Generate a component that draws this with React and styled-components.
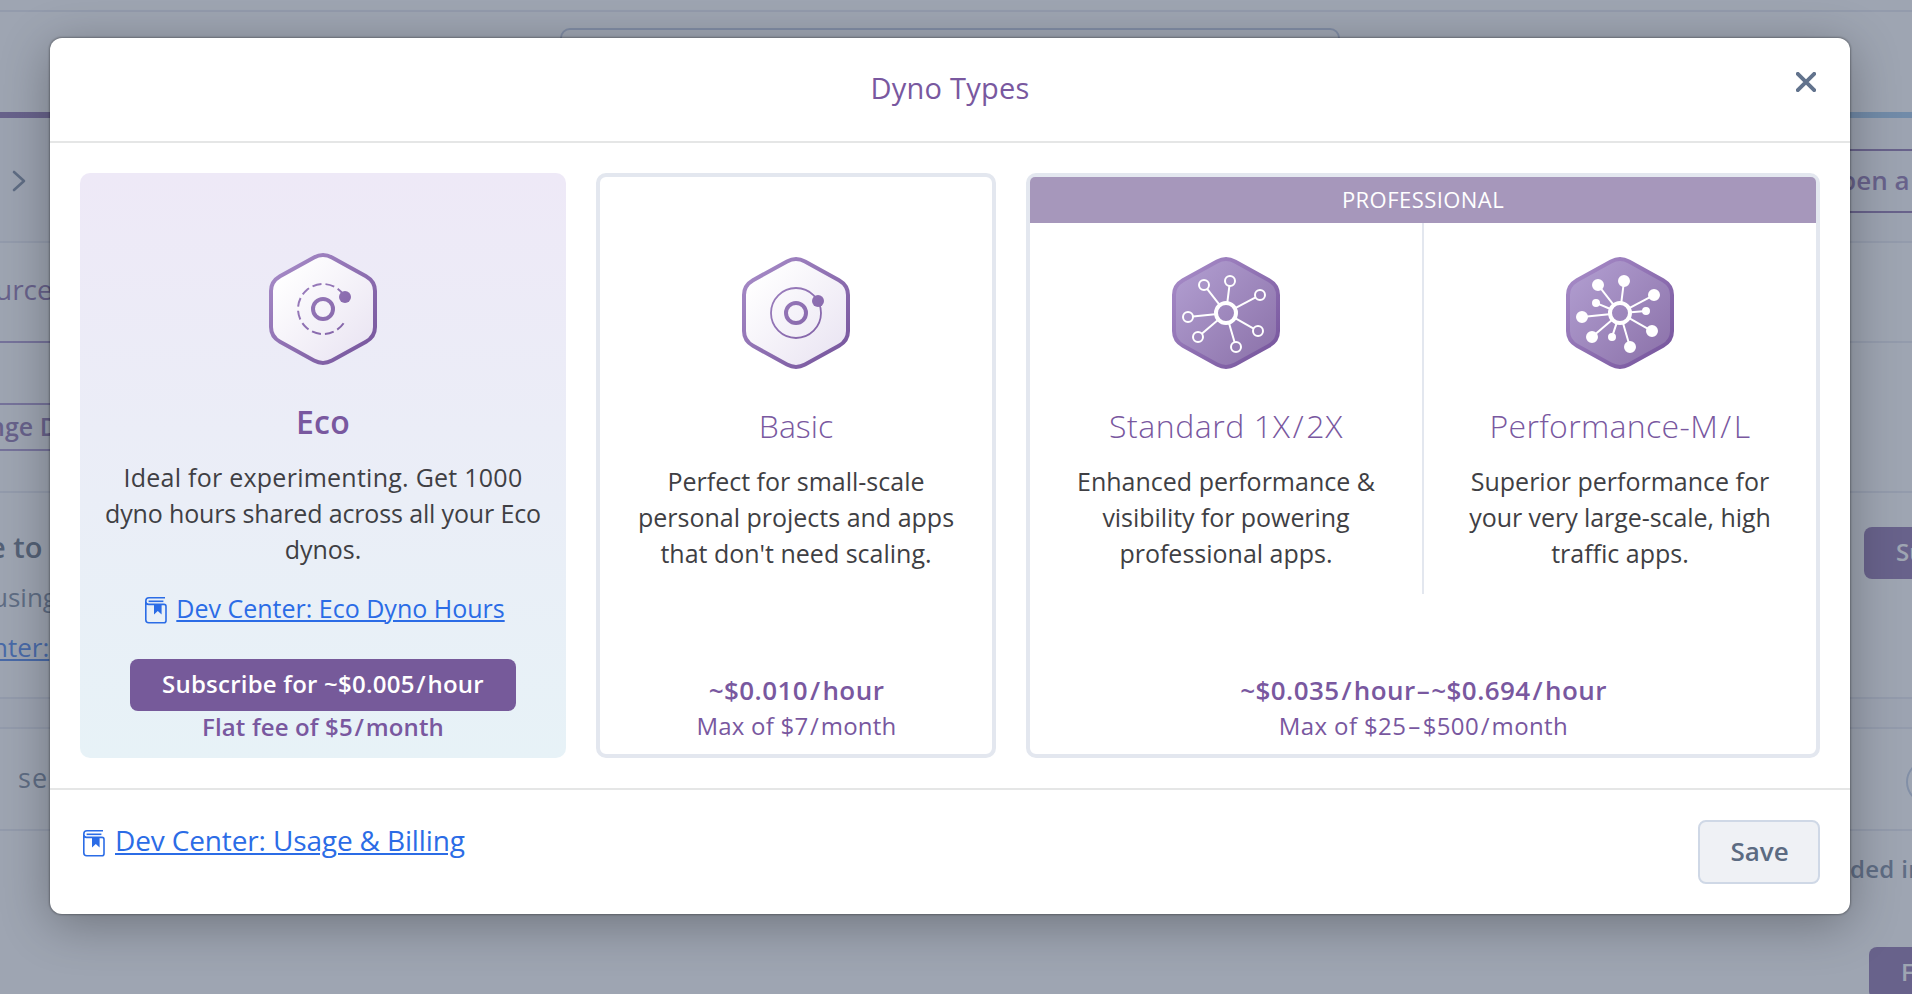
import React from "react";
import styled, { createGlobalStyle } from "styled-components";

const GlobalStyle = createGlobalStyle`
  *, *::before, *::after { box-sizing: border-box; }
  body {
    margin: 0;
    overflow: hidden;
    background: #ffffff;
    font-family: "Open Sans", "Noto Sans", sans-serif;
    color: #3f3f44;
  }
`;

const purple = "#79589f";
const slate = "#62738d";
const hairline = "#e3e7f0";

/* ---------- Page behind the dialog ---------- */

const Screen = styled.div`
  display: grid;
  width: 1912px;
  height: 994px;
  overflow: hidden;
`;

const Page = styled.main`
  grid-area: 1 / 1;
  display: flex;
  flex-direction: column;
  min-width: 0;
  overflow: hidden;
`;

const Strip = styled.div`
  display: flex;
  flex: none;
  justify-content: ${(p) => p.$justify || "space-between"};
  align-items: flex-start;
  height: ${(p) => p.$height}px;
  padding-top: ${(p) => p.$top || 0}px;
  background: ${(p) => p.$background || "transparent"};
  border-bottom: ${(p) => (p.$line === false ? "0" : `2px solid ${hairline}`)};
`;

const SearchBox = styled.div`
  width: 780px;
  height: 56px;
  margin-right: 12px;
  border: 2px solid #b4c0dc;
  border-radius: 10px;
`;

const AccentBar = styled.div`
  flex: none;
  height: 6px;
  background: linear-gradient(90deg, ${purple}, #8fbfe8);
`;

const LeftColumn = styled.div`
  display: flex;
  flex-direction: column;
  gap: ${(p) => p.$gap || 0}px;
  width: 60px;
  padding-top: ${(p) => p.$top || 0}px;
`;

const RightColumn = styled.div`
  width: 62px;
`;

const PageText = styled.span`
  display: block;
  height: 36px;
  margin-left: ${(p) => p.$shift || 0}px;
  font-size: ${(p) => p.$size || 25}px;
  font-weight: ${(p) => (p.$strong ? 600 : 400)};
  line-height: 36px;
  letter-spacing: ${(p) => p.$spacing || 0}px;
  color: ${(p) => p.$color || slate};
  white-space: nowrap;
`;

const PageLink = styled(PageText)`
  color: #2b6ce6;
  text-decoration: underline;
  text-decoration-thickness: 2px;
  text-underline-offset: 2px;
`;

const Tab = styled.div`
  width: 60px;
  height: 100px;
  padding-top: 28px;
  border-bottom: 2px solid #9b82c5;
`;

const OutlineButton = styled.div`
  width: ${(p) => p.$width}px;
  height: ${(p) => p.$height}px;
  padding-top: ${(p) => p.$top}px;
  border: solid ${(p) => p.$color || purple};
  border-width: 2px 0;
`;

const PageButton = styled.div`
  width: ${(p) => p.$width}px;
  height: 52px;
  padding: 7px 0 0 32px;
  border-radius: 8px 0 0 8px;
  background: ${purple};
  overflow: hidden;
`;

const Toggle = styled.div`
  width: 6px;
  height: 44px;
  overflow: hidden;

  &::before {
    content: "";
    display: block;
    width: 80px;
    height: 44px;
    border: 2px solid #b9c8e2;
    border-radius: 22px;
  }
`;

/* ---------- Dialog ---------- */

const Overlay = styled.div`
  grid-area: 1 / 1;
  z-index: 1;
  display: flex;
  align-items: flex-start;
  padding: 38px 0 0 50px;
  background: rgba(93, 105, 127, 0.6);
`;

const Dialog = styled.section`
  width: 1800px;
  height: 876px;
  display: flex;
  flex-direction: column;
  border-radius: 12px;
  background: #ffffff;
  box-shadow: 0 0 2px 1px rgba(0, 0, 0, 0.28), 0 10px 50px rgba(0, 0, 0, 0.3);
`;

const DialogHeader = styled.header`
  display: grid;
  grid-template-columns: 1fr auto 1fr;
  height: 105px;
  padding: 0 34px;
  border-bottom: 2px solid #e5e6e6;
`;

const DialogTitle = styled.h1`
  grid-column: 2;
  margin: 0;
  font-size: 29px;
  font-weight: 400;
  line-height: 99px;
  letter-spacing: 0.25px;
  color: ${purple};
`;

const CloseButton = styled.button`
  justify-self: end;
  width: 20px;
  height: 20px;
  margin: 34px 0 0;
  padding: 0;
  border: 0;
  background: none;
`;

const Plans = styled.div`
  display: grid;
  grid-template-columns: 486px 400px 794px;
  gap: 30px;
  height: 645px;
  padding: 30px 30px 0;
`;

const Card = styled.article`
  display: flex;
  flex-direction: column;
  height: 585px;
  border: 4px solid #e3e7ef;
  border-radius: 10px;
  text-align: center;
`;

const SelectedCard = styled(Card)`
  align-items: center;
  padding-top: 80px;
  border: 0;
  background: linear-gradient(180deg, #eee9f7, #e7f2f7);
`;

const Plan = styled.div`
  display: flex;
  flex-direction: column;
  align-items: center;
  padding: ${(p) => p.$top || 0}px 0 ${(p) => p.$bottom || 0}px;
`;

const HexIcon = styled.svg`
  display: block;
  width: 108px;
  height: 112px;
  overflow: visible;
`;

const PlanName = styled.h2`
  margin: 37px 0 17px;
  font-size: 32px;
  font-weight: ${(p) => (p.$selected ? 600 : 300)};
  line-height: 40px;
  letter-spacing: ${(p) => p.$spacing || 0}px;
  color: ${purple};
  white-space: nowrap;
`;

const Description = styled.p`
  display: flex;
  flex-direction: column;
  margin: 0 0 ${(p) => p.$bottom || 0}px;
  font-size: 25px;
  line-height: 36px;
  white-space: nowrap;
`;

const Line = styled.span`
  letter-spacing: ${(p) => p.$spacing || 0}px;
`;

const DocLink = styled.a`
  display: flex;
  gap: 9px;
  margin-left: ${(p) => p.$left || 0}px;
  font-size: ${(p) => p.$size}px;
  line-height: ${(p) => p.$line}px;
  letter-spacing: ${(p) => p.$spacing || 0}px;
  color: #2b6ce6;
  white-space: nowrap;

  span {
    text-decoration: underline;
    text-decoration-thickness: 2px;
    text-underline-offset: 2px;
  }
`;

const Book = styled.svg`
  flex: none;
  width: 22px;
  height: 27px;
  margin-top: ${(p) => p.$top}px;
`;

const SubscribeButton = styled.button`
  width: 386px;
  height: 52px;
  margin-top: 33px;
  padding: 0 0 3px;
  border: 0;
  border-radius: 8px;
  background: #765a9a;
  color: #ffffff;
  font: 600 24px "Open Sans", "Noto Sans", sans-serif;
  letter-spacing: 0.22px;
`;

const FlatFee = styled.div`
  font-size: 24px;
  font-weight: 600;
  line-height: 32px;
  letter-spacing: 0.15px;
  color: ${purple};
`;

const Slash = styled.span.attrs({ children: "/" })`
  margin: 0 0.07em;
`;

const Dash = styled.span.attrs({ children: "–" })`
  margin: 0 ${(p) => p.$gap}px;
`;

const Cost = styled.div`
  margin-top: auto;
  padding: 0 0 10px 1px;
  line-height: 36px;
  color: ${purple};
  white-space: nowrap;
`;

const Hourly = styled.div`
  font-size: 26px;
  font-weight: 600;
  letter-spacing: 0.45px;
`;

const Monthly = styled.div`
  font-size: 24px;
  letter-spacing: ${(p) => p.$spacing}px;
`;

const GroupLabel = styled.div`
  height: 46px;
  border-radius: 5px 5px 0 0;
  background: #a697bb;
  color: #ffffff;
  font-size: 22px;
  line-height: 45px;
  letter-spacing: 0.45px;
`;

const PlanPair = styled.div`
  display: grid;
  grid-template-columns: 394px 1fr;

  > :first-child {
    border-right: 2px solid #e3e7ef;
  }
`;

const DialogFooter = styled.footer`
  display: flex;
  flex: 1;
  justify-content: space-between;
  align-items: flex-start;
  padding: 30px 30px 0 33px;
  border-top: 2px solid #e5e6e6;
`;

const FooterLink = styled(DocLink)`
  gap: 10px;
`;

const SaveButton = styled.button`
  width: 122px;
  height: 64px;
  padding: 0 0 3px 1px;
  border: 2px solid #cfd8e6;
  border-radius: 8px;
  background: #eff1f5;
  color: #5c6b82;
  font: 600 26px "Open Sans", "Noto Sans", sans-serif;
`;

/* ---------- Drawings ---------- */

const HEX =
  "M63 4.4 L97 23.2 Q106 28.4 106 38 V74 Q106 83.6 97 88.8 L63 107.6 Q54 112.4 45 107.6 L11 88.8 Q2 83.6 2 74 V38 Q2 28.4 11 23.2 L45 4.4 Q54 -0.4 63 4.4 Z";

const NODES = [[-22, -28], [4, -32], [34, -18], [32, 18], [10, 34], [-28, 24], [-38, 4]];
const SMALL_NODES = [[-24, -10], [26, -2], [-8, 24]];

const between = ([x, y], end) => {
  const length = Math.hypot(x, y);
  return {
    x1: (x * 11) / length,
    y1: (y * 11) / length,
    x2: (x * (length - end)) / length,
    y2: (y * (length - end)) / length,
  };
};

function Hexagon({ id, filled, children }) {
  return (
    <HexIcon viewBox="0 0 108 112">
      <defs>
        <linearGradient id={`${id}-edge`} gradientUnits="userSpaceOnUse" x1="12" y1="16" x2="98" y2="98">
          <stop offset="0" stopColor="#a387c4" />
          <stop offset="1" stopColor="#79589f" />
        </linearGradient>
        <linearGradient id={`${id}-body`} gradientUnits="userSpaceOnUse" x1="14" y1="18" x2="94" y2="94">
          <stop offset="0" stopColor={filled ? "#ae9acd" : "#ffffff"} />
          <stop offset="1" stopColor={filled ? "#8f76ad" : "#ebe6f3"} />
        </linearGradient>
      </defs>
      <path d={HEX} fill={`url(#${id}-body)`} stroke={`url(#${id}-edge)`} strokeWidth="4" />
      {children}
    </HexIcon>
  );
}

function OrbitIcon({ id, dashed }) {
  const edge = `url(#${id}-edge)`;
  return (
    <Hexagon id={id}>
      <circle cx="54" cy="56" r="10" fill="none" stroke={edge} strokeWidth="4" />
      {dashed ? (
        <path d="M74.6 70.2 A25 25 0 1 1 75 42.4" fill="none" stroke={edge} strokeWidth="2" strokeDasharray="9.09 4" />
      ) : (
        <circle cx="54" cy="56" r="25" fill="none" stroke={edge} strokeWidth="1.8" />
      )}
      <circle cx="76" cy="44" r="6" fill={edge} />
    </Hexagon>
  );
}

function NetworkIcon({ id, dense }) {
  return (
    <Hexagon id={id} filled>
      <g transform="translate(54 56)" stroke="#ffffff" strokeWidth="2" fill="none">
        <circle r="10" strokeWidth="4" />
        {NODES.map((node) => (
          <g key={node.join()}>
            <line {...between(node, 5)} />
            <circle cx={node[0]} cy={node[1]} r="5" fill={dense ? "#ffffff" : "none"} />
          </g>
        ))}
        {dense &&
          SMALL_NODES.map((node) => (
            <g key={node.join()}>
              <line {...between(node, 3)} />
              <circle cx={node[0]} cy={node[1]} r="3" fill="#ffffff" />
            </g>
          ))}
      </g>
    </Hexagon>
  );
}

function BookIcon({ top }) {
  return (
    <Book $top={top} viewBox="0 0 22 27" fill="none" stroke="#2b6ce6" strokeWidth="1.6">
      <path d="M20 0.8 H4 Q0.8 0.8 0.8 4 V22.8 Q0.8 25.8 3.8 25.8 H19 Q21 25.8 21 23.8 V9.4 Q21 7.4 19 7.4 H3.6 Q0.8 7.4 0.8 4.2" />
      <path d="M3.6 4.3 H18.4" />
      <path d="M9 7.5 H16.6 V17.4 L12.8 14 L9 17.4 Z" fill="#2b6ce6" stroke="none" />
    </Book>
  );
}

/* ---------- Screens ---------- */

function ResourcesPage() {
  return (
    <Page aria-hidden="true">
      <Strip $height={12} />
      <Strip $height={100} $top={16} $justify="center" $line={false}>
        <SearchBox />
      </Strip>
      <AccentBar />
      <Strip $height={125} $top={31} $background="#f9fafc">
        <LeftColumn>
          <svg width="32" height="62" viewBox="0 0 32 62" fill="none" stroke={slate} strokeWidth="2.6" strokeLinecap="round" strokeLinejoin="round">
            <path d="M14 23 L24 32 L14 41" />
          </svg>
        </LeftColumn>
        <OutlineButton $width={72} $height={64} $top={11}>
          <PageText $size={26} $strong $color={purple}>pen a</PageText>
        </OutlineButton>
      </Strip>
      <Strip $height={100}>
        <Tab>
          <PageText $size={28} $shift={-5} $color={purple}>urce</PageText>
        </Tab>
      </Strip>
      <Strip $height={150} $top={60}>
        <OutlineButton $width={60} $height={48} $top={3} $color="#9b82c5">
          <PageText $strong $shift={-11} $color={purple}>nge D</PageText>
        </OutlineButton>
      </Strip>
      <Strip $height={206} $top={34}>
        <LeftColumn $top={2} $gap={14}>
          <PageText $size={29} $strong $shift={-11} $color="#475569">e to</PageText>
          <PageText $size={26} $shift={-8}>using</PageText>
          <PageLink $size={26} $shift={-8}>nter:</PageLink>
        </LeftColumn>
        <PageButton $width={48}>
          <PageText $size={24} $strong $color="#ffffff">Su</PageText>
        </PageButton>
      </Strip>
      <Strip $height={30} $background="#f9fafc" />
      <Strip $height={102} $top={31}>
        <PageText $shift={18} $size={27} $spacing={1.2}>se</PageText>
        <Toggle />
      </Strip>
      <Strip $height={116} $top={20} $justify="flex-end" $line={false}>
        <RightColumn>
          <PageText $size={24} $strong $spacing={0.3}>ded in</PageText>
        </RightColumn>
      </Strip>
      <Strip $height={52} $justify="flex-end" $line={false}>
        <PageButton $width={43}>
          <PageText $size={24} $strong $color="#ffffff">F</PageText>
        </PageButton>
      </Strip>
    </Page>
  );
}

export default function App() {
  return (
    <Screen>
      <GlobalStyle />
      <ResourcesPage />
      <Overlay>
        <Dialog role="dialog">
          <DialogHeader>
            <DialogTitle>Dyno Types</DialogTitle>
            <CloseButton aria-label="Close">
              <svg width="20" height="20" viewBox="0 0 20 20" fill="none" stroke={slate} strokeWidth="3.9" strokeLinecap="round" display="block">
                <path d="M1.8 1.8 L18.2 18.2 M18.2 1.8 L1.8 18.2" />
              </svg>
            </CloseButton>
          </DialogHeader>

          <Plans>
            <SelectedCard>
              <OrbitIcon id="eco" dashed />
              <PlanName $selected $spacing={0.3}>Eco</PlanName>
              <Description $bottom={23}>
                <Line $spacing={0.25}>Ideal for experimenting. Get 1000</Line>
                <Line $spacing={-0.14}>dyno hours shared across all your Eco</Line>
                <Line>dynos.</Line>
              </Description>
              <DocLink $left={4} $size={25} $line={36}>
                <BookIcon top={7} />
                <span>Dev Center: Eco Dyno Hours</span>
              </DocLink>
              <SubscribeButton>Subscribe for ~$0.005<Slash />hour</SubscribeButton>
              <FlatFee>Flat fee of $5<Slash />month</FlatFee>
            </SelectedCard>

            <Card>
              <Plan $top={80}>
                <OrbitIcon id="basic" />
                <PlanName>Basic</PlanName>
                <Description>
                  <Line>Perfect for small-scale</Line>
                  <Line>personal projects and apps</Line>
                  <Line>that don't need scaling.</Line>
                </Description>
              </Plan>
              <Cost>
                <Hourly>~$0.010<Slash />hour</Hourly>
                <Monthly $spacing={0.22}>Max of $7<Slash />month</Monthly>
              </Cost>
            </Card>

            <Card>
              <GroupLabel>PROFESSIONAL</GroupLabel>
              <PlanPair>
                <Plan $top={34} $bottom={23}>
                  <NetworkIcon id="standard" />
                  <PlanName $spacing={0.55}>Standard 1X<Slash />2X</PlanName>
                  <Description>
                    <Line>Enhanced performance &amp;</Line>
                    <Line $spacing={-0.06}>visibility for powering</Line>
                    <Line>professional apps.</Line>
                  </Description>
                </Plan>
                <Plan $top={34} $bottom={23}>
                  <NetworkIcon id="performance" dense />
                  <PlanName $spacing={0.33}>Performance-M<Slash />L</PlanName>
                  <Description>
                    <Line>Superior performance for</Line>
                    <Line $spacing={-0.06}>your very large-scale, high</Line>
                    <Line>traffic apps.</Line>
                  </Description>
                </Plan>
              </PlanPair>
              <Cost>
                <Hourly>~$0.035<Slash />hour<Dash $gap={1} />~$0.694<Slash />hour</Hourly>
                <Monthly $spacing={0.38}>Max of $25<Dash $gap={2} />$500<Slash />month</Monthly>
              </Cost>
            </Card>
          </Plans>

          <DialogFooter>
            <FooterLink $size={28} $line={40} $spacing={-0.14}>
              <BookIcon top={10} />
              <span>Dev Center: Usage &amp; Billing</span>
            </FooterLink>
            <SaveButton>Save</SaveButton>
          </DialogFooter>
        </Dialog>
      </Overlay>
    </Screen>
  );
}
